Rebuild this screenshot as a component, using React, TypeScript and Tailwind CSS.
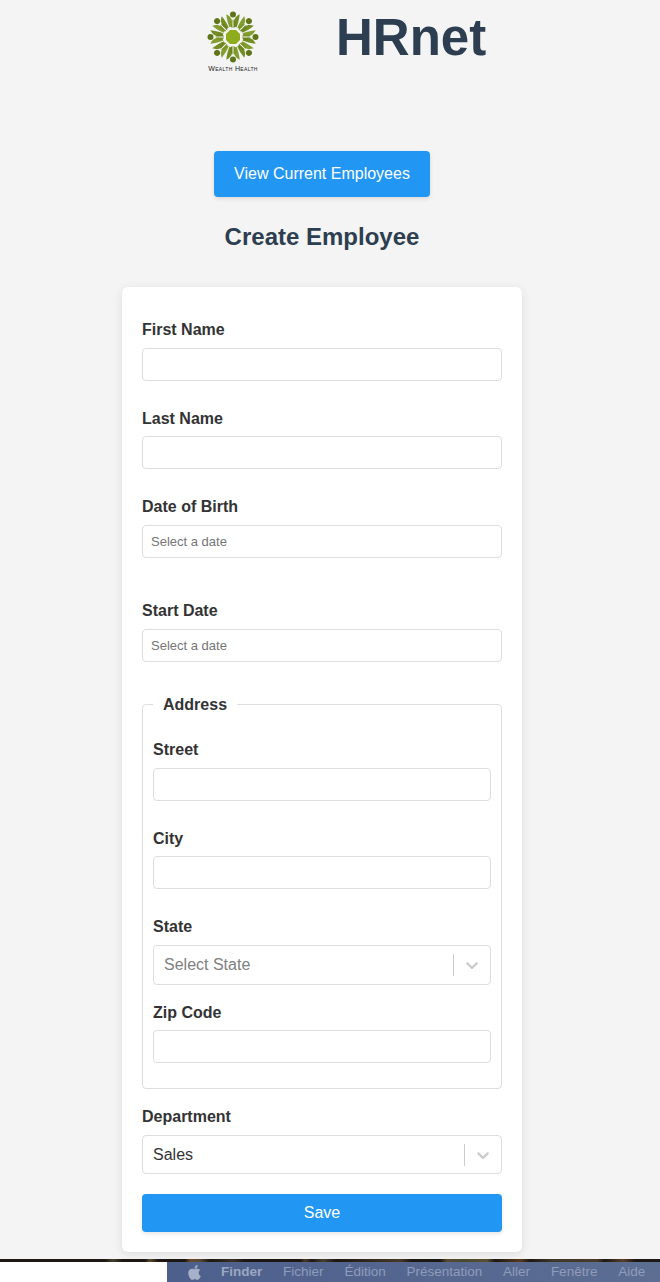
import { FaApple } from "react-icons/fa";

const angles = [0, 45, 90, 135, 180, 225, 270, 315];

const Logo = () => {
  return (
    <div className="flex w-[56px] flex-col items-center pt-[10px]">
      <svg width="54" height="54" viewBox="-27 -27 54 54">
        {angles.map((a) => (
          <g key={a} transform={`rotate(${a})`}>
            <circle cx="0" cy="-22.5" r="3" fill="#5f7519" />
            {/* petal pair between two dots */}
            <g transform="rotate(22.5)">
              <path d="M-0.4 -10 C-7 -13 -6.5 -19 -2.5 -23.5 C-1 -19 -0.4 -14 -0.4 -10 Z" fill="#728d22" />
              <path d="M0.4 -10 C7 -13 6.5 -19 2.5 -23.5 C1 -19 0.4 -14 0.4 -10 Z" fill="#839e2e" />
            </g>
            {/* small inner petals under the dot */}
            <path d="M-0.5 -9 L-3 -10.5 L-2.6 -15.5 L-0.5 -17.5 Z" fill="#7a9424" />
            <path d="M0.5 -9 L3 -10.5 L2.6 -15.5 L0.5 -17.5 Z" fill="#6a841d" />
          </g>
        ))}
        <polygon points="-3,-7 3,-7 7,-3 7,3 3,7 -3,7 -7,3 -7,-3" fill="#8fac1c" />
      </svg>
      <span className="mt-[1px] text-[7px] leading-[8px] tracking-[0.35px] whitespace-nowrap text-[#222] [font-variant:small-caps]">
        Wealth Health
      </span>
    </div>
  );
};

const TextField = ({ label, className = "" }: { label: string; className?: string }) => {
  return (
    <div className={className}>
      <label className="block text-base leading-[18px] font-bold text-[#333]">{label}</label>
      <input
        type="text"
        className="mt-[8.75px] block h-[33px] w-full rounded-[4px] border border-[#ddd] bg-white"
      />
    </div>
  );
};

const DateField = ({ label, className = "" }: { label: string; className?: string }) => {
  return (
    <div className={className}>
      <label className="block text-base leading-[18px] font-bold text-[#333]">{label}</label>
      <input
        type="text"
        placeholder="Select a date"
        className="mt-[8.75px] block h-[33px] w-full rounded-[4px] border border-[#ddd] bg-white px-2 text-[13px] placeholder:text-[#757575]"
      />
    </div>
  );
};

const SelectField = ({ value, muted, className = "" }: { value: string; muted?: boolean; className?: string }) => {
  return (
    <div className={`mt-[8.75px] flex items-center rounded-[4px] border border-[#ddd] bg-white pl-[10px] ${className}`}>
      <span className={`flex-1 text-base ${muted ? "text-[#808080]" : "text-[#333]"}`}>{value}</span>
      <span className="h-[22px] w-px bg-[#ccc]" />
      <svg className="mx-[8px]" width="20" height="20" viewBox="0 0 20 20" fill="#ccc">
        <path d="M4.516 7.548c.436-.446 1.043-.481 1.576 0L10 11.295l3.908-3.747c.533-.481 1.141-.446 1.574 0 .436.445.408 1.197 0 1.615-.406.418-4.695 4.502-4.695 4.502a1.095 1.095 0 0 1-1.576 0S4.924 9.581 4.516 9.163c-.409-.418-.436-1.17 0-1.615z" />
      </svg>
    </div>
  );
};

const menuItems = ["Fichier", "Édition", "Présentation", "Aller", "Fenêtre", "Aide"];

const App = () => {
  return (
    <div className="min-h-[1282px] bg-[#f4f4f4] font-['Liberation_Sans',Arial,sans-serif]">
      <header className="flex h-[151px] items-start pl-[205px]">
        <Logo />
        <h1 className="mt-[8px] ml-[75px] text-[51px] leading-[60px] font-bold text-[#2c3e50]">HRnet</h1>
      </header>

      <div className="flex flex-col items-center pr-[16px]">
        <button className="h-[46px] w-[216px] rounded-[4px] bg-[#2196f3] text-base text-white shadow-[0_2px_4px_rgba(0,0,0,0.1)]">
          View Current Employees
        </button>
        <h2 className="mt-[26px] text-2xl leading-[28px] font-bold text-[#2c3e50]">Create Employee</h2>

        <form className="mt-[36px] h-[965px] w-[400px] rounded-[6px] bg-white px-5 pt-[34px] shadow-[0_2px_10px_rgba(0,0,0,0.1)]">
          <TextField label="First Name" />
          <TextField label="Last Name" className="mt-[28.75px]" />
          <DateField label="Date of Birth" className="mt-[28.75px]" />
          <DateField label="Start Date" className="mt-[44.5px]" />

          <fieldset className="mt-[32px] h-[395px] rounded-[4px] border border-[#ddd] px-[10px]">
            <legend className="px-[10px] pt-[2px] text-base leading-[18px] font-bold text-[#333]">Address</legend>
            <TextField label="Street" className="mt-[27px]" />
            <TextField label="City" className="mt-[28.75px]" />
            <div className="mt-[28.75px]">
              <label className="block text-base leading-[18px] font-bold text-[#333]">State</label>
              <SelectField value="Select State" muted className="h-[40px]" />
            </div>
            <TextField label="Zip Code" className="mt-[18.75px]" />
          </fieldset>

          <div className="mt-[19.25px]">
            <label className="block text-base leading-[18px] font-bold text-[#333]">Department</label>
            <SelectField value="Sales" className="h-[39px]" />
          </div>

          <button
            type="button"
            className="mt-[20px] h-[38px] w-full rounded-[4px] bg-[#2196f3] text-base text-white shadow-[0_2px_4px_rgba(0,0,0,0.1)]"
          >
            Save
          </button>
        </form>
      </div>

      <div className="mt-[7px] h-[3px] bg-[linear-gradient(90deg,#1d1813_0,#1d1813_105px,#4a4030_113px,#1d1813_122px,#1d1813_145px,#5f4c30_150px,#1d1813_158px,#1d1813_185px,#6b4a2a_190px,#5a4a35_200px,#1d1813_210px,#3a3026_233px,#1d1813_245px,#1d1813_300px,#4a3a28_305px,#1d1813_312px,#4a4030_323px,#1d1813_336px,#4a3a28_400px,#1d1813_412px,#1d1813_440px,#5a4a30_447px,#4a4a30_463px,#5a5030_487px,#1d1813_495px,#5a3a20_520px,#1d1813_530px,#40382a_553px,#4a3a28_597px,#1d1813_605px,#5a4028_623px,#1d1813_635px)]" />
      <div className="flex h-[20px] bg-white pl-[167px]">
        <nav className="flex flex-1 items-center bg-linear-to-r from-[#4d5f8c] to-[#5d6e93] pl-[19px] text-[13.5px] text-[#8f9cbb]">
          <FaApple className="mr-[18px] text-[17px] text-[#a6b0c8]" />
          <span className="mr-[20.8px] font-bold text-[#9ba7c2]">Finder</span>
          {menuItems.map((item) => (
            <span key={item} className="mr-[20.8px]">
              {item}
            </span>
          ))}
        </nav>
      </div>
    </div>
  );
};

export default App;
